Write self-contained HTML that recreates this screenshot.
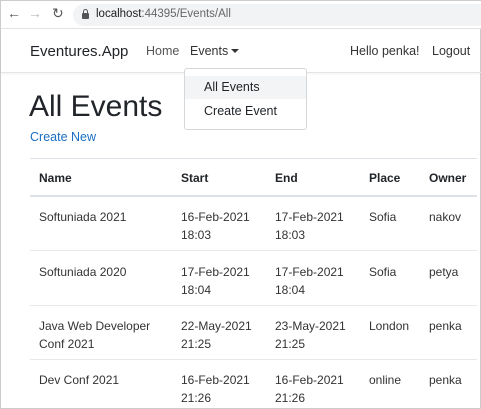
<!DOCTYPE html><html><head><style>
*{margin:0;padding:0;box-sizing:border-box}
body{width:481px;height:409px;overflow:hidden;background:#fff;font-family:"Liberation Sans",sans-serif;color:#212529;position:relative;border:1px solid #ccc}
.a{position:absolute;white-space:nowrap}
.t{font-size:12px;color:#333}
.h{font-size:12px;font-weight:bold}
</style></head><body>
<div class="a" style="left:0;top:0;width:481px;height:28px;background:#fff;border-bottom:1px solid #e3e3e3"></div>
<div class="a" style="left:6px;top:4px;font-size:14px;color:#555">&#8592;</div>
<div class="a" style="left:27px;top:4px;font-size:14px;color:#bbb">&#8594;</div>
<div class="a" style="left:51px;top:4px;font-size:14px;color:#555">&#8635;</div>
<div class="a" style="left:72px;top:3px;width:420px;height:22px;border-radius:11px;background:#f1f3f4"></div>
<div class="a" style="left:81px;top:12px;width:7px;height:6px;background:#555;border-radius:1px"></div>
<div class="a" style="left:82px;top:8px;width:5px;height:5px;border:1.5px solid #555;border-radius:3px 3px 0 0"></div>
<div class="a" style="left:95px;top:7px;font-size:11.5px;color:#202124">localhost<span style="color:#666">:44395/Events/All</span></div>
<div class="a" style="left:0;top:28px;width:481px;height:44px;border-bottom:1px solid #e5e5e5;box-shadow:0 1px 3px rgba(0,0,0,.05)"></div>
<div class="a" style="left:29px;top:42px;font-size:15px;color:#212529">Eventures.App</div>
<div class="a" style="left:145px;top:43px;font-size:12.5px;color:#555">Home</div>
<div class="a" style="left:189px;top:43px;font-size:12.5px;color:#333">Events</div>
<div class="a" style="left:230px;top:48px;border-left:4px solid transparent;border-right:4px solid transparent;border-top:4px solid #333"></div>
<div class="a" style="left:349px;top:43px;font-size:12.5px;color:#333">Hello penka!</div>
<div class="a" style="left:431px;top:43px;font-size:12.5px;color:#333">Logout</div>
<div class="a" style="left:28px;top:89px;font-size:30px;font-weight:500;color:#212529">All Events</div>
<div class="a" style="left:29px;top:129px;font-size:12.5px;color:#1b6ec2">Create New</div>
<div class="a" style="left:29px;top:157px;width:447px;border-top:1px solid #dee2e6"></div>
<div class="a h" style="left:38px;top:170px">Name</div>
<div class="a h" style="left:180px;top:170px">Start</div>
<div class="a h" style="left:274px;top:170px">End</div>
<div class="a h" style="left:368px;top:170px">Place</div>
<div class="a h" style="left:428px;top:170px">Owner</div>
<div class="a" style="left:29px;top:194px;width:447px;border-top:2px solid #dee2e6"></div>
<div class="a" style="left:29px;top:249px;width:447px;border-top:1px solid #e6e9ec"></div>
<div class="a" style="left:29px;top:304px;width:447px;border-top:1px solid #e6e9ec"></div>
<div class="a" style="left:29px;top:358px;width:447px;border-top:1px solid #e6e9ec"></div>
<div class="a t" style="left:38px;top:207px;line-height:18px">Softuniada 2021</div>
<div class="a t" style="left:180px;top:207px;line-height:18px">16-Feb-2021<br>18:03</div>
<div class="a t" style="left:274px;top:207px;line-height:18px">17-Feb-2021<br>18:03</div>
<div class="a t" style="left:368px;top:207px;line-height:18px">Sofia</div>
<div class="a t" style="left:428px;top:207px;line-height:18px">nakov</div>
<div class="a t" style="left:38px;top:262px;line-height:18px">Softuniada 2020</div>
<div class="a t" style="left:180px;top:262px;line-height:18px">17-Feb-2021<br>18:04</div>
<div class="a t" style="left:274px;top:262px;line-height:18px">17-Feb-2021<br>18:04</div>
<div class="a t" style="left:368px;top:262px;line-height:18px">Sofia</div>
<div class="a t" style="left:428px;top:262px;line-height:18px">petya</div>
<div class="a t" style="left:38px;top:316px;line-height:18px">Java Web Developer<br>Conf 2021</div>
<div class="a t" style="left:180px;top:316px;line-height:18px">22-May-2021<br>21:25</div>
<div class="a t" style="left:274px;top:316px;line-height:18px">23-May-2021<br>21:25</div>
<div class="a t" style="left:368px;top:316px;line-height:18px">London</div>
<div class="a t" style="left:428px;top:316px;line-height:18px">penka</div>
<div class="a t" style="left:38px;top:370px;line-height:18px">Dev Conf 2021</div>
<div class="a t" style="left:180px;top:370px;line-height:18px">16-Feb-2021<br>21:26</div>
<div class="a t" style="left:274px;top:370px;line-height:18px">16-Feb-2021<br>21:26</div>
<div class="a t" style="left:368px;top:370px;line-height:18px">online</div>
<div class="a t" style="left:428px;top:370px;line-height:18px">penka</div>
<div class="a" style="left:183px;top:67px;width:123px;height:62px;background:#fff;border:1px solid #d5d8db;border-radius:3px"></div>
<div class="a" style="left:184px;top:75px;width:121px;height:23px;background:#f3f4f6"></div>
<div class="a" style="left:203px;top:79px;font-size:12.5px;color:#212529">All Events</div>
<div class="a" style="left:203px;top:103px;font-size:12.5px;color:#212529">Create Event</div>
</body></html>
